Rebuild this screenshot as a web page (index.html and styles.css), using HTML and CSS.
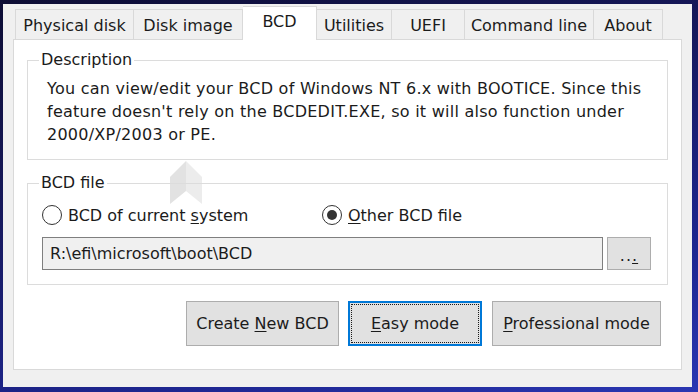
FILE: index.html
```html
<!DOCTYPE html>
<html lang="en">
<head>
<meta charset="utf-8">
<title>BOOTICE - BCD</title>
<link rel="stylesheet" href="styles.css">
</head>
<body>
<div class="window">
  <div class="tabs">
    <div class="tab t-phys">Physical disk</div>
    <div class="tab t-disk">Disk image</div>
    <div class="tab active t-bcd">BCD</div>
    <div class="tab t-util">Utilities</div>
    <div class="tab t-uefi">UEFI</div>
    <div class="tab t-cmd">Command line</div>
    <div class="tab t-about">About</div>
  </div>
  <div class="panel">
    <svg class="watermark" width="34" height="44" viewBox="0 0 34 44" aria-hidden="true">
      <polygon points="17,0 33,16 33,43 17,30" fill="#ececec"/>
      <polygon points="17,0 1,16 1,43 17,30" fill="#e2e2e2"/>
    </svg>
    <fieldset class="group desc">
      <legend>Description</legend>
      <p class="desc-text">You can view/edit your BCD of Windows NT 6.x with BOOTICE. Since this<br>feature doesn't rely on the BCDEDIT.EXE, so it will also function under<br>2000/XP/2003 or PE.</p>
    </fieldset>
    <fieldset class="group file">
      <legend>BCD file</legend>
      <div class="radios">
        <label class="radio r-current"><span class="circle"></span><span>BCD of current <u>s</u>ystem</span></label>
        <label class="radio"><span class="circle checked"></span><span><u>O</u>ther BCD file</span></label>
      </div>
      <div class="path-row">
        <div class="path">R:\efi\microsoft\boot\BCD</div>
        <div class="browse"><span>..<u>.</u></span></div>
      </div>
    </fieldset>
    <div class="actions">
      <div class="btn b-create"><span>Create <u>N</u>ew BCD</span></div>
      <div class="btn b-easy focused"><span class="focus-ring"><span><u>E</u>asy mode</span></span></div>
      <div class="btn b-pro"><span><u>P</u>rofessional mode</span></div>
    </div>
  </div>
</div>
</body>
</html>
```

FILE: styles.css
```css
html, body {
  margin: 0;
  padding: 0;
}
body {
  width: 698px;
  height: 392px;
  overflow: hidden;
  background: linear-gradient(165deg, #0d0d34 0%, #16185a 35%, #1e2690 75%, #2a36b2 100%);
  font-family: "DejaVu Sans", sans-serif;
  font-size: 16px;
  color: #1b1b1b;
}
.window {
  box-sizing: border-box;
  margin: 4px 6px 0 3px;
  width: 689px;
  height: 383px;
  background: #f0f0f0;
  padding: 2px 0 0 10px;
}
.tabs {
  display: flex;
  align-items: flex-end;
  height: 33px;
  padding-left: 2px;
  position: relative;
  z-index: 1;
}
.tab {
  box-sizing: border-box;
  height: 30px;
  border: 1px solid #d9d9d9;
  border-bottom: none;
  border-left: none;
  background: #f0f0f0;
  text-align: center;
  line-height: 31px;
  white-space: nowrap;
}
.tab.t-phys { border-left: 1px solid #d9d9d9; }
.tab.active {
  height: 34px;
  margin-bottom: -1px;
  background: #ffffff;
  line-height: 30px;
  border-left: none;
}
.t-phys { width: 119px; }
.t-disk { width: 109px; }
.t-bcd { width: 74px; }
.t-util { width: 75px; }
.t-uefi { width: 73px; }
.t-cmd { width: 129px; }
.t-about { width: 69px; }
.panel {
  position: relative;
  box-sizing: border-box;
  width: 669px;
  height: 331px;
  background: #ffffff;
  border: 1px solid #d9d9d9;
  padding: 10px 13px 0 13px;
}
.watermark {
  position: absolute;
  left: 155px;
  top: 121px;
}
.group {
  position: relative;
  margin: 0;
  border: 1px solid #dcdcdc;
  border-radius: 0;
  min-width: 0;
}
.group legend {
  padding: 0 2px;
  margin-left: -8px;
  line-height: 20px;
  font-size: 16px;
}
.desc {
  padding: 7px 10px 13px 19px;
}
.desc-text {
  margin: 0;
  line-height: 23px;
  white-space: nowrap;
  letter-spacing: 0.25px;
}
.file {
  margin-top: 13px;
  padding: 10px 15px 14px 14px;
}
.file legend {
  margin-left: -3px;
}
.radios {
  display: flex;
  align-items: center;
  height: 24px;
}
.radio {
  display: flex;
  align-items: center;
  gap: 6px;
  white-space: nowrap;
}
.r-current {
  width: 280px;
}
.circle {
  box-sizing: border-box;
  width: 20px;
  height: 20px;
  border-radius: 50%;
  border: 1px solid #333333;
  background: #ffffff;
  display: flex;
  align-items: center;
  justify-content: center;
}
.circle.checked::after {
  content: "";
  width: 10px;
  height: 10px;
  border-radius: 50%;
  background: #333333;
}
.path-row {
  display: flex;
  gap: 4px;
  margin-top: 10px;
}
.path {
  box-sizing: border-box;
  width: 561px;
  height: 33px;
  border: 1px solid #7f7f7f;
  background: #f0f0f0;
  padding-left: 7px;
  line-height: 31px;
  white-space: nowrap;
}
.browse {
  box-sizing: border-box;
  width: 44px;
  height: 33px;
  border: 1px solid #adadad;
  background: #e1e1e1;
  display: flex;
  align-items: center;
  justify-content: center;
  padding-top: 4px;
  letter-spacing: 1px;
}
.actions {
  display: flex;
  justify-content: flex-end;
  gap: 9px;
  margin-top: 16px;
  padding-right: 7px;
}
.btn {
  box-sizing: border-box;
  height: 45px;
  border: 1px solid #adadad;
  background: #e1e1e1;
  display: flex;
  align-items: center;
  justify-content: center;
  white-space: nowrap;
}
.b-create { width: 153px; }
.b-easy { width: 134px; }
.b-pro { width: 169px; margin-left: 1px; }
.btn.focused {
  border: 2px solid #0078d7;
  padding: 1px;
}
.focus-ring {
  box-sizing: border-box;
  width: 100%;
  height: 100%;
  border: 1px dotted #1a1a1a;
  display: flex;
  align-items: center;
  justify-content: center;
}
u {
  text-decoration-thickness: 1px;
  text-underline-offset: 2px;
}
```
